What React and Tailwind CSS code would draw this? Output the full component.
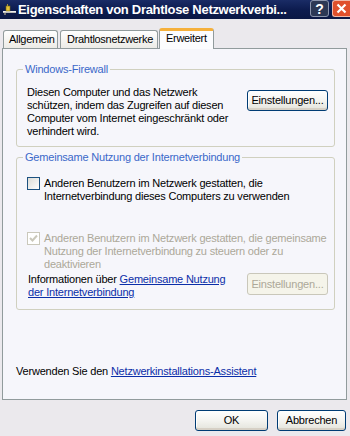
import React from "react";

const font = { fontFamily: '"Liberation Sans", Arial, sans-serif' };

function XpButton({ children, disabled, className = "" }) {
  return (
    <button
      type="button"
      className={
        "flex items-center justify-center whitespace-nowrap rounded-[3px] border text-[11px] leading-[13px] tracking-[-0.2px] " +
        (disabled
          ? "border-[#c9c7ba] bg-[#f5f4ea] text-[#aca899] "
          : "border-[#003c74] bg-gradient-to-b from-white via-[#f4f4f0] to-[#e3e3db] text-black shadow-[inset_0_-2px_0_#d6d0c5,inset_1px_0_0_#fff] ") +
        className
      }
    >
      {children}
    </button>
  );
}

function Checkbox({ checked, disabled }) {
  return (
    <span
      className={
        "flex h-[13px] w-[13px] shrink-0 items-center justify-center border " +
        (disabled
          ? "border-[#cac8bb] bg-white"
          : "border-[#1c5180] bg-gradient-to-br from-[#dcdcd7] to-white")
      }
    >
      {checked ? (
        <svg width="9" height="9" viewBox="0 0 9 9">
          <path d="M1 4 L3.5 6.5 L8 1.5" fill="none" stroke={disabled ? "#cac8bb" : "#21a121"} strokeWidth="2" />
        </svg>
      ) : null}
    </span>
  );
}

function GroupBox({ title, children, className = "" }) {
  return (
    <fieldset className={"rounded-[3px] border border-[#d0d0bf] pl-[10px] pr-[6px] " + className}>
      <legend className="-ml-[4px] px-[2px] text-[11px] leading-[13px] text-[#3a68c9]">{title}</legend>
      {children}
    </fieldset>
  );
}

export default function App() {
  return (
    <div className="flex h-[436px] w-[350px] flex-col overflow-hidden bg-[#ebe9ed]" style={font}>
      <div className="flex h-[19px] items-center bg-gradient-to-b from-[#1a2c66] via-[#0d1c4f] to-[#0a1744] pl-[2px]">
        <svg width="15" height="15" viewBox="0 0 15 15" className="shrink-0">
          <rect x="1" y="9" width="13" height="2" fill="#bdbdbd" />
          <rect x="1" y="9" width="13" height="1" fill="#f0f0f0" />
          <rect x="4" y="4" width="4" height="5" fill="#e3c23a" stroke="#7a6a10" strokeWidth="0.6" />
          <rect x="5" y="2" width="1" height="2" fill="#a09040" />
          <rect x="2" y="11" width="2" height="2" fill="#707070" />
        </svg>
        <span className="ml-[1px] whitespace-nowrap text-[13px] font-bold leading-[15px] tracking-[-0.3px] text-white">
          Eigenschaften von Drahtlose Netzwerkverbi...
        </span>
        <div className="ml-auto flex h-full items-start gap-[3px]">
          <span className="flex h-[17px] w-[19px] items-center justify-center rounded-[3px] border border-[#8b95ad] bg-[#2c3855] text-[14px] font-bold leading-none text-white">
            ?
          </span>
          <span className="flex h-[17px] w-[18px] items-center justify-center rounded-l-[3px] border border-r-0 border-[#f0b8a8] bg-[#e0502c]">
            <svg width="11" height="11" viewBox="0 0 11 11">
              <path d="M1.5 1.5 L9.5 9.5 M9.5 1.5 L1.5 9.5" stroke="white" strokeWidth="2.2" />
            </svg>
          </span>
        </div>
      </div>

      <div className="ml-[2px] mt-[8px] flex h-[21px] w-[345px] items-end whitespace-nowrap text-[11px] leading-[13px] tracking-[-0.3px]">
        <div className="ml-[1px] flex h-[18px] w-[55px] items-center rounded-t-[3px] border border-b-0 border-[#919b9c] bg-gradient-to-b from-white to-[#ecebe6] pl-[5px]">
          Allgemein
        </div>
        <div className="ml-[2px] flex h-[18px] w-[98px] items-center rounded-t-[3px] border border-b-0 border-[#919b9c] bg-gradient-to-b from-white to-[#ecebe6] pl-[6px]">
          Drahtlosnetzwerke
        </div>
        <div className="relative z-10 -mb-[1px] ml-[1px] flex h-[21px] w-[55px] items-start rounded-t-[3px] border-x border-[#919b9c] border-t-[3px] border-t-[#f5b03c] bg-[#fcfcfe] pl-[6px] pt-[1px]">
          Erweitert
        </div>
      </div>

      <div className="ml-[2px] flex h-[352px] w-[345px] flex-col border border-[#919b9c] bg-[#f6f6fb] pl-[13px] pr-[11px] text-[11px] leading-[13px] tracking-[-0.2px] text-black">
        <GroupBox title="Windows-Firewall" className="mt-[14px] pb-[8px]">
          <div className="flex pt-[10px]">
            <p className="w-[216px] whitespace-nowrap">
              Diesen Computer und das Netzwerk
              <br />
              schützen, indem das Zugreifen auf diesen
              <br />
              Computer vom Internet eingeschränkt oder
              <br />
              verhindert wird.
            </p>
            <XpButton className="ml-auto mt-[4px] h-[21px] w-[81px]">Einstellungen...</XpButton>
          </div>
        </GroupBox>

        <GroupBox title="Gemeinsame Nutzung der Internetverbindung" className="mt-[4px] pb-[10px]">
          <div className="flex gap-[4px] pt-[13px]">
            <Checkbox />
            <p className="whitespace-nowrap">
              Anderen Benutzern im Netzwerk gestatten, die
              <br />
              Internetverbindung dieses Computers zu verwenden
            </p>
          </div>
          <div className="mt-[29px] flex gap-[4px] text-[#aca899]">
            <Checkbox checked disabled />
            <p className="whitespace-nowrap">
              Anderen Benutzern im Netzwerk gestatten, die gemeinsame
              <br />
              Nutzung der Internetverbindung zu steuern oder zu
              <br />
              deaktivieren
            </p>
          </div>
          <div className="mt-[2px] flex">
            <p className="whitespace-nowrap pl-[1px]">
              Informationen über{" "}
              <span className="text-[#0b2ea8] underline">Gemeinsame Nutzung</span>
              <br />
              <span className="text-[#0b2ea8] underline">der Internetverbindung</span>
            </p>
            <XpButton disabled className="ml-auto h-[22px] w-[81px]">
              Einstellungen...
            </XpButton>
          </div>
        </GroupBox>

        <p className="mb-[21px] mt-auto">
          Verwenden Sie den <span className="text-[#0b2ea8] underline">Netzwerkinstallations-Assistent</span>
        </p>
      </div>

      <div className="mt-[10px] flex justify-end gap-[9px] pr-[4px]">
        <XpButton className="h-[21px] w-[73px]">OK</XpButton>
        <XpButton className="h-[21px] w-[69px]">Abbrechen</XpButton>
      </div>
    </div>
  );
}
